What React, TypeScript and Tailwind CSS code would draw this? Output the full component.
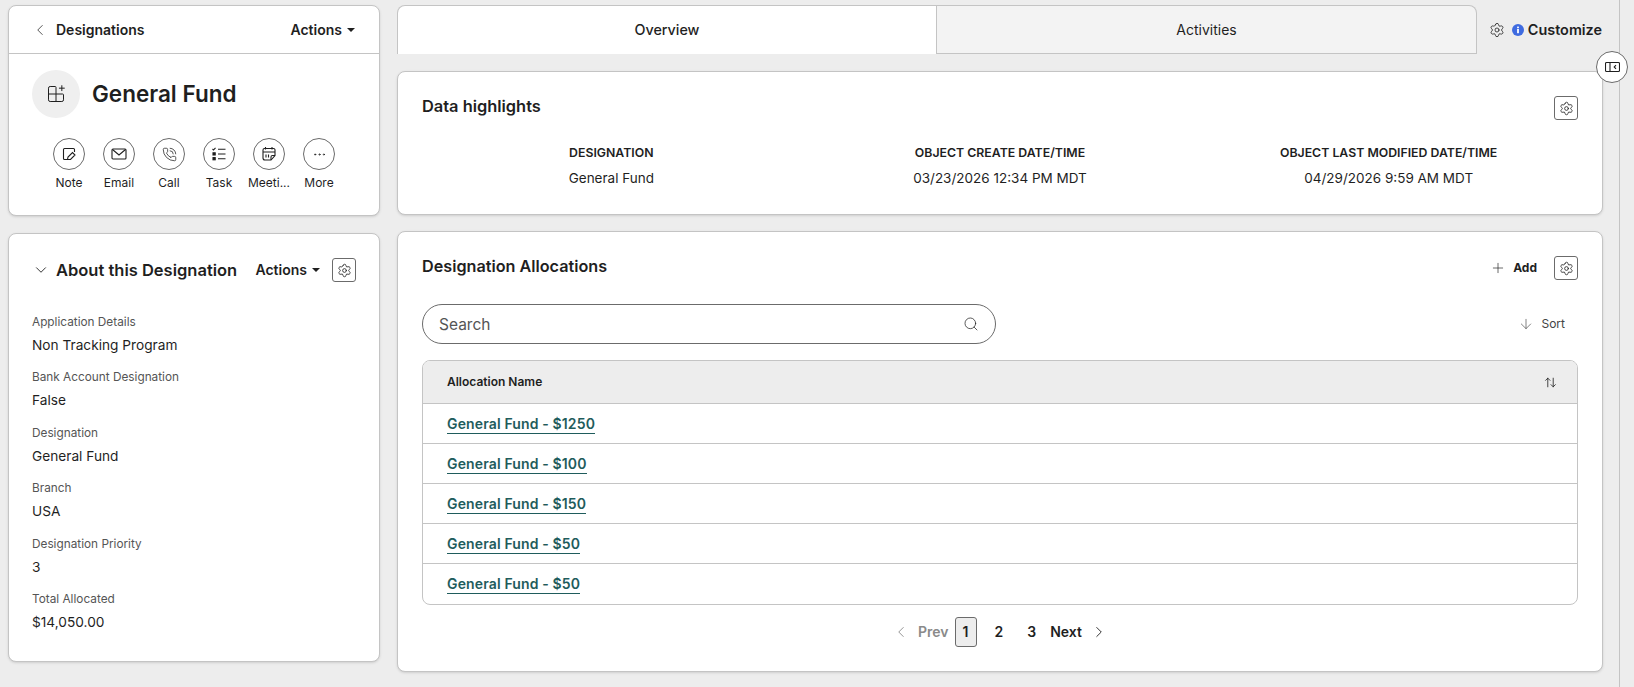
import {
  ChevronDown,
  ChevronLeft,
  ChevronRight,
  ArrowDown,
  ArrowUpDown,
  Ellipsis,
  Grid2x2Plus,
  PhoneCall,
  Plus,
  Search,
  Settings,
} from "lucide-react";

function Caret() {
  return <span className="ml-[5px] inline-block h-0 w-0 border-x-[4px] border-t-[4px] border-x-transparent border-t-[#1f1f1f]" />;
}

function GearButton() {
  return (
    <button className="flex h-6 w-6 items-center justify-center rounded-[3px] border border-[#6b6b6b]">
      <Settings size={15} strokeWidth={1.3} />
    </button>
  );
}

function NoteIcon() {
  return (
    <svg width="16" height="16" viewBox="0 0 16 16" fill="none" stroke="#1f1f1f" strokeWidth="1.1">
      <path d="M6 13.5H3.5a1 1 0 0 1-1-1v-9a1 1 0 0 1 1-1h9a1 1 0 0 1 1 1V6" />
      <path d="M6.5 13.5 7 11l4.5-4.5 2.5 2.5-4.5 4.5z" />
    </svg>
  );
}

function MailIcon() {
  return (
    <svg width="16" height="14" viewBox="0 0 16 14" fill="none" stroke="#1f1f1f" strokeWidth="1.1">
      <rect x="1" y="2" width="14" height="10" rx="1" />
      <path d="M1.5 2.5 8 8l6.5-5.5" />
    </svg>
  );
}

function TaskIcon() {
  return (
    <svg width="16" height="16" viewBox="0 0 16 16" fill="none" stroke="#1f1f1f" strokeWidth="1.1">
      <path d="m1.5 3 1 1 2-2.2M7 3.2h7.5M7 8h7.5M7 12.8h7.5" />
      <rect x="2" y="6.8" width="2.2" height="2.2" fill="#1f1f1f" />
      <rect x="2" y="11.6" width="2.2" height="2.2" fill="#1f1f1f" />
    </svg>
  );
}

function MeetingIcon() {
  return (
    <svg width="16" height="16" viewBox="0 0 16 16" fill="none" stroke="#1f1f1f" strokeWidth="1.1">
      <path d="M4.5 1v2.5M11 1v2.5M2 6h12" />
      <path d="M10 14H4a2 2 0 0 1-2-2V4a1.5 1.5 0 0 1 1.5-1.5h9A1.5 1.5 0 0 1 14 4v5.5z" />
      <path d="M10 14v-3a1.5 1.5 0 0 1 1.5-1.5H14M5 8.5v3M7.5 8.5v3" />
    </svg>
  );
}

function PanelIcon() {
  return (
    <svg width="15" height="12" viewBox="0 0 15 12" fill="none" stroke="#1f1f1f" strokeWidth="1.1">
      <rect x="0.5" y="1.5" width="14" height="9" rx="1" />
      <path d="M5 1.5v9M11 4.2 9.2 6l1.8 1.8" />
    </svg>
  );
}

const actions = [
  { label: "Note", icon: <NoteIcon /> },
  { label: "Email", icon: <MailIcon /> },
  { label: "Call", icon: <PhoneCall size={15} strokeWidth={1.2} /> },
  { label: "Task", icon: <TaskIcon /> },
  { label: "Meeti...", icon: <MeetingIcon /> },
  { label: "More", icon: <Ellipsis size={15} strokeWidth={1.2} /> },
];

const fields = [
  ["Application Details", "Non Tracking Program"],
  ["Bank Account Designation", "False"],
  ["Designation", "General Fund"],
  ["Branch", "USA"],
  ["Designation Priority", "3"],
  ["Total Allocated", "$14,050.00"],
];

const highlights = [
  ["DESIGNATION", "General Fund"],
  ["OBJECT CREATE DATE/TIME", "03/23/2026 12:34 PM MDT"],
  ["OBJECT LAST MODIFIED DATE/TIME", "04/29/2026 9:59 AM MDT"],
];

const rows = ["General Fund - $1250", "General Fund - $100", "General Fund - $150", "General Fund - $50", "General Fund - $50"];

export default function App() {
  return (
    <div className="relative flex h-[687px] w-[1634px] overflow-hidden bg-[#ededed] font-['Inter',sans-serif] text-[#1f1f1f]">
      <div className="ml-2 mt-[5px] flex w-[372px] flex-col gap-[17px]">
        <div className="h-[211px] rounded-lg border border-[#c4c4c4] bg-white shadow-sm">
          <div className="flex h-[48px] items-center justify-between border-b border-[#c4c4c4] pl-[22px] pr-6">
            <div className="flex items-center gap-[7px]">
              <ChevronLeft size={18} strokeWidth={1} />
              <span className="text-sm font-semibold">Designations</span>
            </div>
            <div className="flex items-center text-sm font-semibold">
              Actions
              <Caret />
            </div>
          </div>
          <div className="ml-[23px] mt-4 flex items-center gap-3">
            <div className="flex h-12 w-12 items-center justify-center rounded-full bg-[#efefef]">
              <Grid2x2Plus size={20} strokeWidth={1.2} className="-scale-y-100" />
            </div>
            <span className="text-[22.5px] font-semibold">General Fund</span>
          </div>
          <div className="ml-[35px] mt-5 flex">
            {actions.map((a) => (
              <div key={a.label} className="flex w-[50px] flex-col items-center">
                <div className="flex h-8 w-8 items-center justify-center rounded-full border border-[#6b6b6b]">
                  {a.icon}
                </div>
                <span className="mt-[5px] text-xs">{a.label}</span>
              </div>
            ))}
          </div>
        </div>

        <div className="h-[429px] rounded-lg border border-[#c4c4c4] bg-white pl-[23px] pr-[23px] pt-6 shadow-sm">
          <div className="flex h-6 items-center justify-between">
            <div className="flex items-center gap-[6px]">
              <ChevronDown size={18} strokeWidth={1.2} />
              <span className="text-[16.5px] font-semibold">About this Designation</span>
            </div>
            <div className="flex items-center">
              <span className="flex items-center text-sm font-semibold">
                Actions
                <Caret />
              </span>
              <div className="ml-3">
                <GearButton />
              </div>
            </div>
          </div>
          <div className="mt-8 flex flex-col gap-[14.4px]">
            {fields.map(([k, v]) => (
              <div key={k} className="flex flex-col gap-1">
                <span className="text-[11.8px] leading-[17px] text-[#555555]">{k}</span>
                <span className="text-[13.7px] leading-[20px]">{v}</span>
              </div>
            ))}
          </div>
        </div>
      </div>

      <div className="ml-[17px] mt-[5px] flex w-[1206px] flex-col">
        <div className="flex h-[49px] items-stretch">
          <div className="flex w-[540px] items-center justify-center rounded-tl-lg border border-b-0 border-[#c4c4c4] bg-white text-[14.3px] font-medium">Overview</div>
          <div className="flex w-[540px] items-center justify-center rounded-tr-lg border border-l-0 border-[#c4c4c4] bg-[#f3f3f3] text-sm">Activities</div>
          <div className="mr-px flex flex-1 items-center justify-end">
            <Settings size={16} strokeWidth={1.2} />
            <svg width="12" height="12" viewBox="0 0 12 12" className="ml-[7px]">
              <circle cx="6" cy="6" r="6" fill="#3f6be0" />
              <rect x="5.1" y="5" width="1.8" height="4.2" fill="#ffffff" />
              <rect x="5.1" y="2.6" width="1.8" height="1.6" fill="#ffffff" />
            </svg>
            <span className="ml-1 text-[14.4px] font-semibold">Customize</span>
          </div>
        </div>

        <div className="mt-[17px] h-[144px] rounded-lg border border-[#c4c4c4] bg-white px-6 pt-6 shadow-sm">
          <div className="flex items-start justify-between">
            <span className="-mt-[2px] text-[16.4px] font-semibold">Data highlights</span>
            <GearButton />
          </div>
          <div className="-mx-[5px] mt-6 grid grid-cols-3">
            {highlights.map(([k, v]) => (
              <div key={k} className="flex flex-col items-center gap-[6px]">
                <span className="text-[12.3px] font-semibold">{k}</span>
                <span className="text-[13.5px]">{v}</span>
              </div>
            ))}
          </div>
        </div>

        <div className="mt-4 h-[441px] rounded-lg border border-[#c4c4c4] bg-white px-6 pt-[22px] shadow-sm">
          <div className="flex items-center justify-between">
            <span className="pb-1 text-[16.2px] font-semibold">Designation Allocations</span>
            <div className="flex items-center">
              <Plus size={16} strokeWidth={1} />
              <span className="ml-[7px] text-xs font-bold">Add</span>
              <div className="ml-[17px]">
                <GearButton />
              </div>
            </div>
          </div>
          <div className="mt-[22px] flex items-center justify-between">
            <div className="flex h-10 w-[574px] items-center justify-between rounded-full border border-[#6b6b6b] px-4">
              <span className="text-[15.5px] text-[#555555]">Search</span>
              <Search size={16} strokeWidth={1.1} />
            </div>
            <div className="mr-[13px] flex items-center gap-[7px] text-xs text-[#444444]">
              <ArrowDown size={16} strokeWidth={1} />
              Sort
            </div>
          </div>
          <div className="mt-4 overflow-hidden rounded-lg border border-[#c4c4c4]">
            <div className="flex h-[43px] items-center justify-between border-b border-[#c4c4c4] bg-[#ededed] pl-6 pr-5">
              <span className="text-xs font-semibold">Allocation Name</span>
              <ArrowUpDown size={13} strokeWidth={1.5} />
            </div>
            {rows.map((r, i) => (
              <div key={i} className="flex h-[40px] items-center border-b border-[#c4c4c4] px-6 last:border-b-0">
                <span className="border-b border-[#1f5c5c] text-sm font-semibold leading-[19px] tracking-[0.01em] text-[#1f5c5c]">{r}</span>
              </div>
            ))}
          </div>
          <div className="mt-3 flex items-center justify-center text-sm font-semibold">
            <ChevronLeft size={18} strokeWidth={1.2} className="text-[#8a8a8a]" />
            <span className="ml-2 text-[#8a8a8a]">Prev</span>
            <span className="ml-[6px] flex h-[30px] w-[22px] items-center justify-center rounded-[3px] border border-[#6b6b6b] bg-[#ededed]">1</span>
            <span className="ml-[18px]">2</span>
            <span className="ml-[24px]">3</span>
            <span className="ml-[14px]">Next</span>
            <ChevronRight size={18} strokeWidth={1.2} className="ml-2" />
          </div>
        </div>
      </div>

      <div className="ml-4 border-l border-[#c4c4c4]" />
      <div className="absolute left-[1596px] top-[51px] flex h-8 w-8 items-center justify-center rounded-full border border-[#6b6b6b] bg-white">
        <PanelIcon />
      </div>
    </div>
  );
}
